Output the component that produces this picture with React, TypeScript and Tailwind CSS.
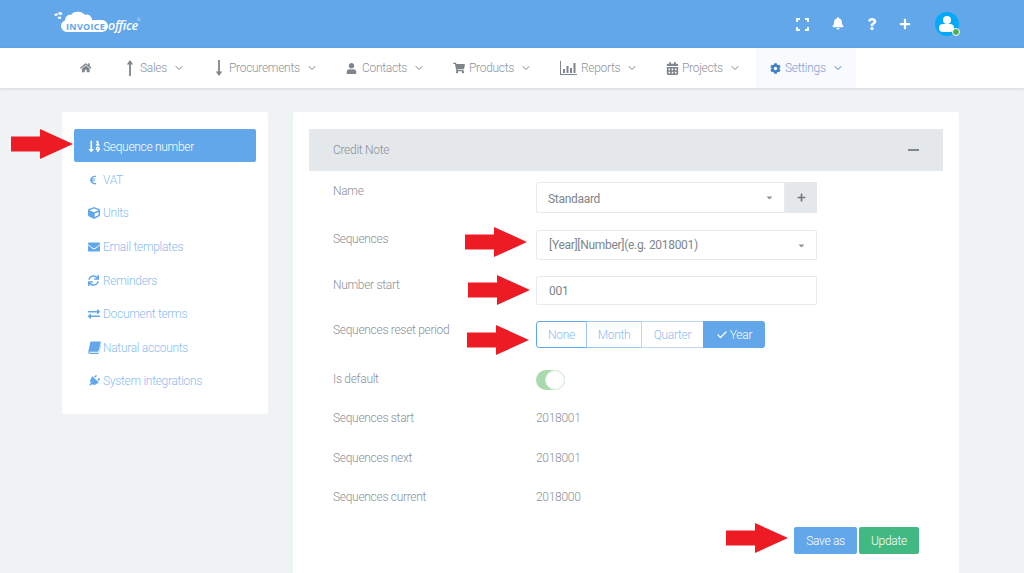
import React from "react";
import { FaHome, FaUser, FaShoppingCart, FaCalendarAlt, FaCog, FaSortNumericDown, FaEuroSign, FaCube, FaEnvelope, FaSync, FaExchangeAlt, FaPlug, FaBell, FaQuestion, FaPlus, FaCaretDown } from "react-icons/fa";
import { ChevronDown, Check } from "lucide-react";

const Expand = () => (
  <svg width="13" height="13" viewBox="0 0 13 13" fill="none" stroke="white" strokeWidth="1.8">
    <path d="M1 4V1h3M9 1h3v3M12 9v3H9M4 12H1V9" />
  </svg>
);

const LongUp = () => (
  <svg width="10" height="16" viewBox="0 0 10 16" fill="currentColor">
    <path d="M5 0l3.200 4.500H5.900V16H4.100V4.500H1.800z" />
  </svg>
);

const LongDown = () => (
  <svg width="10" height="16" viewBox="0 0 10 16" fill="currentColor">
    <path d="M5 16l3.200-4.500H5.900V0H4.100v11.500H1.800z" />
  </svg>
);

const BarsIcon = ({ className }: { className?: string }) => (
  <svg width="17" height="14" viewBox="0 0 17 14" className={className} fill="currentColor">
    <path d="M0 0h1v13h16v1H0z" />
    <path d="M3 8h2v4H3zM6.500 5h2v7h-2zM10 7h2v5h-2zM13.500 2h2v10h-2z" />
  </svg>
);

const BookIcon = ({ className }: { className?: string }) => (
  <svg width="13" height="13" viewBox="0 0 13 13" className={className} fill="currentColor">
    <path d="M3 0.500h9.500c.4 0 .5.300.4.600L10.500 10c-.2.600-.5.800-1 .8H2c-.6 0-.8.600-.4 1h8.400c.3 0 .5-.1.600-.4l2-7.400.4.300-2.300 8c-.1.400-.4.600-.8.600H2c-1.200 0-2-1-1.700-2.200L2.300 1.200C2.400.800 2.600.500 3 .500z" />
  </svg>
);

const Logo = () => (
  <div className="relative h-[22px] w-[88px]">
    <svg width="58" height="22" viewBox="0 0 58 22" fill="white" className="absolute left-0 top-0">
      <path d="M0 3.500l3-1.500 1 2-2.500 1.200zM4 1.500L7.500 1l1 2.500L5 4zM3.500 6l3-.5 1 2-3 .5z" />
      <path d="M7 15c0-3 2-5 4-5.500C11 6 14 3 17 4c1-3 6-4 9-3 2 0 4 2 5 3 2-1 5 0 6 2 1 1 1 2 1 3h10c3 0 6 3 6 6s-3 6-6 6H13c-3 0-6-3-6-6z" />
    </svg>
    <span className="absolute left-[12px] top-[9.500px] text-[9px] leading-[11px] font-bold tracking-[0.3px] text-[#62a7ea] [font-family:'Open_Sans',sans-serif]">INVOICE</span>
    <span className="absolute left-[54px] top-[7px] text-[12.500px] leading-[15px] italic font-semibold tracking-[-0.3px] text-white [font-family:'Open_Sans',sans-serif]">office</span>
    <span className="absolute left-[83px] top-[7px] text-[4px] leading-[4px] text-white">®</span>
  </div>
);

const Arrow = ({ x, y }: { x: number; y: number }) => (
  <svg width="62" height="30" viewBox="0 0 62 30" className="absolute" style={{ left: x, top: y }}>
    <path d="M0 7.500H29V0L62 15 29 30V22.500H0z" fill="#ed1c24" />
  </svg>
);

const navItems = [
  { icon: <LongUp />, box: "w-[15px]", label: "Sales", w: "w-[89px]" },
  { icon: <LongDown />, box: "w-[15px]", label: "Procurements", w: "w-[132px]" },
  { icon: <FaUser className="text-[11px]" />, box: "w-[16px]", label: "Contacts", w: "w-[107px]" },
  { icon: <FaShoppingCart className="text-[12px]" />, box: "w-[16px]", label: "Products", w: "w-[107px]" },
  { icon: <BarsIcon />, box: "w-[21px]", label: "Reports", w: "w-[106px]" },
  { icon: <FaCalendarAlt className="text-[13px]" />, box: "w-[16px]", label: "Projects", w: "w-[90px]" },
];

const sideItems = [
  { icon: <FaEuroSign className="text-[10px]" />, label: "VAT" },
  { icon: <FaCube className="text-[12px]" />, label: "Units" },
  { icon: <FaEnvelope className="text-[12px]" />, label: "Email templates" },
  { icon: <FaSync className="text-[11px]" />, label: "Reminders" },
  { icon: <FaExchangeAlt className="text-[12px]" />, label: "Document terms" },
  { icon: <BookIcon />, label: "Natural accounts" },
  { icon: <FaPlug className="rotate-45 text-[12px]" />, label: "System integrations" },
];

const Row = ({ label, children, className }: { label: string; children: React.ReactNode; className: string }) => (
  <div className={`flex items-start pl-[24px] ${className}`}>
    <div className="-mt-px h-5 w-[203px] shrink-0 leading-5 text-[#8b919a]">{label}</div>
    {children}
  </div>
);

const Info = ({ label, value, className }: { label: string; value: string; className: string }) => (
  <div className={`flex h-5 items-center pl-[24px] text-[#8b919a] ${className}`}>
    <div className="w-[203px] shrink-0">{label}</div>
    <div>{value}</div>
  </div>
);

export default function App() {
  return (
    <div className="relative h-[573px] w-[1024px] overflow-hidden bg-[#f0f3f4] text-[12px] font-light tracking-[-0.3px] [font-family:Roboto,sans-serif]">
      <header className="flex h-[48px] items-center bg-[#62a7ea] pl-[54px] pr-[65px]">
        <div className="-mt-[4px]"><Logo /></div>
        <div className="ml-auto flex items-center text-white">
          <div className="flex w-[13px] justify-center"><Expand /></div>
          <div className="ml-[23px] flex w-[12px] justify-center"><FaBell className="-mt-[1px] text-[12.500px]" /></div>
          <div className="ml-[22px] flex w-[12px] justify-center"><FaQuestion className="text-[12px]" /></div>
          <div className="ml-[21px] flex w-[12px] justify-center"><FaPlus className="text-[12px]" /></div>
          <div className="relative ml-[24px] h-[24px] w-[24px] rounded-full bg-[#03a9f4]">
            <div className="absolute left-[8px] top-[4px] h-[8px] w-[8px] rounded-full bg-white" />
            <div className="absolute left-[4px] top-[12px] h-[8px] w-[15px] rounded-full bg-white" />
            <div className="absolute -right-[1px] bottom-[0px] h-[8px] w-[8px] rounded-full border border-white bg-[#4caf50]" />
          </div>
        </div>
      </header>
      <nav className="flex h-[40px] items-stretch bg-white pl-[80px] text-[#8f949c] shadow-[0_1px_3px_rgba(0,0,0,0.12)]">
        <div className="flex w-[45px] items-center text-[#7e858d]"><FaHome className="text-[11.500px]" /></div>
        {navItems.map((n) => (
          <div key={n.label} className={`flex items-center ${n.w}`}>
            <div className={`flex items-center text-[#7e858d] ${n.box}`}>{n.icon}</div>
            <span>{n.label}</span>
            <ChevronDown size={12} strokeWidth={2} className="ml-[6px] text-[#7e858d]" />
          </div>
        ))}
        <div className="flex w-[100px] items-center bg-[#f8fafd] pl-[14px] text-[#7f9fd8]">
          <div className="w-[15px]"><FaCog className="text-[11px] text-[#3f7fc4]" /></div>
          <span>Settings</span>
          <ChevronDown size={12} strokeWidth={2} className="ml-[6px] text-[#3f7fc4]" />
        </div>
      </nav>
      <main className="flex items-start gap-[25px] pl-[62px] pt-[24px]">
        <aside className="h-[302px] w-[206px] rounded-[2px] bg-white px-[12px] pt-[17px]">
          <div className="flex h-[33px] items-center rounded-[2px] bg-[#62a7ea] pl-[14px] pt-[2px] text-white">
            <div className="flex w-[15px] items-center"><FaSortNumericDown className="text-[13px]" /></div>
            <span>Sequence number</span>
          </div>
          {sideItems.map((s) => (
            <div key={s.label} className="flex h-[33.600px] items-center pl-[14px] pt-[2px] text-[#8dbdf0]">
              <div className="flex w-[15px] items-center text-[#62a7ea]">{s.icon}</div>
              <span>{s.label}</span>
            </div>
          ))}
        </aside>
        <section className="h-[470px] w-[666px] rounded-[2px] bg-white px-[16px] pt-[17px]">
          <div className="flex h-[42px] items-center justify-between bg-[#e4e8ea] pl-[24px] pr-[24px] text-[#8b919a]">
            <span>Credit Note</span>
            <div className="h-[1.500px] w-[11px] bg-[#7e858d]" />
          </div>
          <Row label="Name" className="mt-[11px]">
            <div className="flex h-[31px] w-[281px] font-normal text-[#7e858d]">
              <div className="flex flex-1 items-center justify-between rounded-l-[2px] border border-[#e7ebee] pl-[11px] pr-[10px]">
                <span className="mt-[2px]">Standaard</span>
                <FaCaretDown className="text-[9px] text-[#8b919a]" />
              </div>
              <div className="flex w-[32px] items-center justify-center bg-[#e4e8ea] text-[#6f767e]"><FaPlus className="text-[9px]" /></div>
            </div>
          </Row>
          <Row label="Sequences" className="mt-[17px]">
            <div className="flex h-[30px] w-[281px] items-center justify-between rounded-[2px] border border-[#e7ebee] pl-[12px] pr-[10px] font-normal text-[#7e858d]">
              <span>[Year][Number](e.g. 2018001)</span>
              <FaCaretDown className="text-[9px] text-[#8b919a]" />
            </div>
          </Row>
          <Row label="Number start" className="mt-[16px]">
            <div className="flex h-[29px] w-[281px] items-center rounded-[2px] border border-[#e7ebee] pl-[12px] font-normal text-[#7e858d]">001</div>
          </Row>
          <Row label="Sequences reset period" className="mt-[16px]">
            <div className="flex h-[27px] w-[229px] text-[#8dbdf0]">
              <div className="flex w-[51px] items-center justify-center rounded-l-[3px] border border-[#62a7ea]">None</div>
              <div className="-ml-px flex w-[56px] items-center justify-center border border-[#9cc7f2]">Month</div>
              <div className="-ml-px flex w-[63px] items-center justify-center border border-[#bcd9f6]">Quarter</div>
              <div className="-ml-px flex flex-1 items-center justify-center gap-[2px] rounded-r-[3px] bg-[#62a7ea] text-white"><Check size={12} strokeWidth={2.5} />Year</div>
            </div>
          </Row>
          <Row label="Is default" className="mt-[22px]">
            <div className="relative h-[20px] w-[29px] rounded-full bg-[#a9d9ac]">
              <div className="absolute right-0 top-0 h-[20px] w-[20px] rounded-full border border-[#dfeee0] bg-white" />
            </div>
          </Row>
          <Info label="Sequences start" value="2018001" className="mt-[18px]" />
          <Info label="Sequences next" value="2018001" className="mt-[20px]" />
          <Info label="Sequences current" value="2018000" className="mt-[19px]" />
          <div className="mt-[20px] flex justify-end gap-[2px] pr-[24px] text-white">
            <div className="flex h-[27px] w-[63px] items-center justify-center rounded-[2px] bg-[#62a7ea]">Save as</div>
            <div className="flex h-[27px] w-[60px] items-center justify-center rounded-[2px] bg-[#42b883]">Update</div>
          </div>
        </section>
      </main>
      <Arrow x={11} y={129} />
      <Arrow x={465} y={227} />
      <Arrow x={468} y={275} />
      <Arrow x={467} y={325} />
      <Arrow x={726} y={523} />
    </div>
  );
}
